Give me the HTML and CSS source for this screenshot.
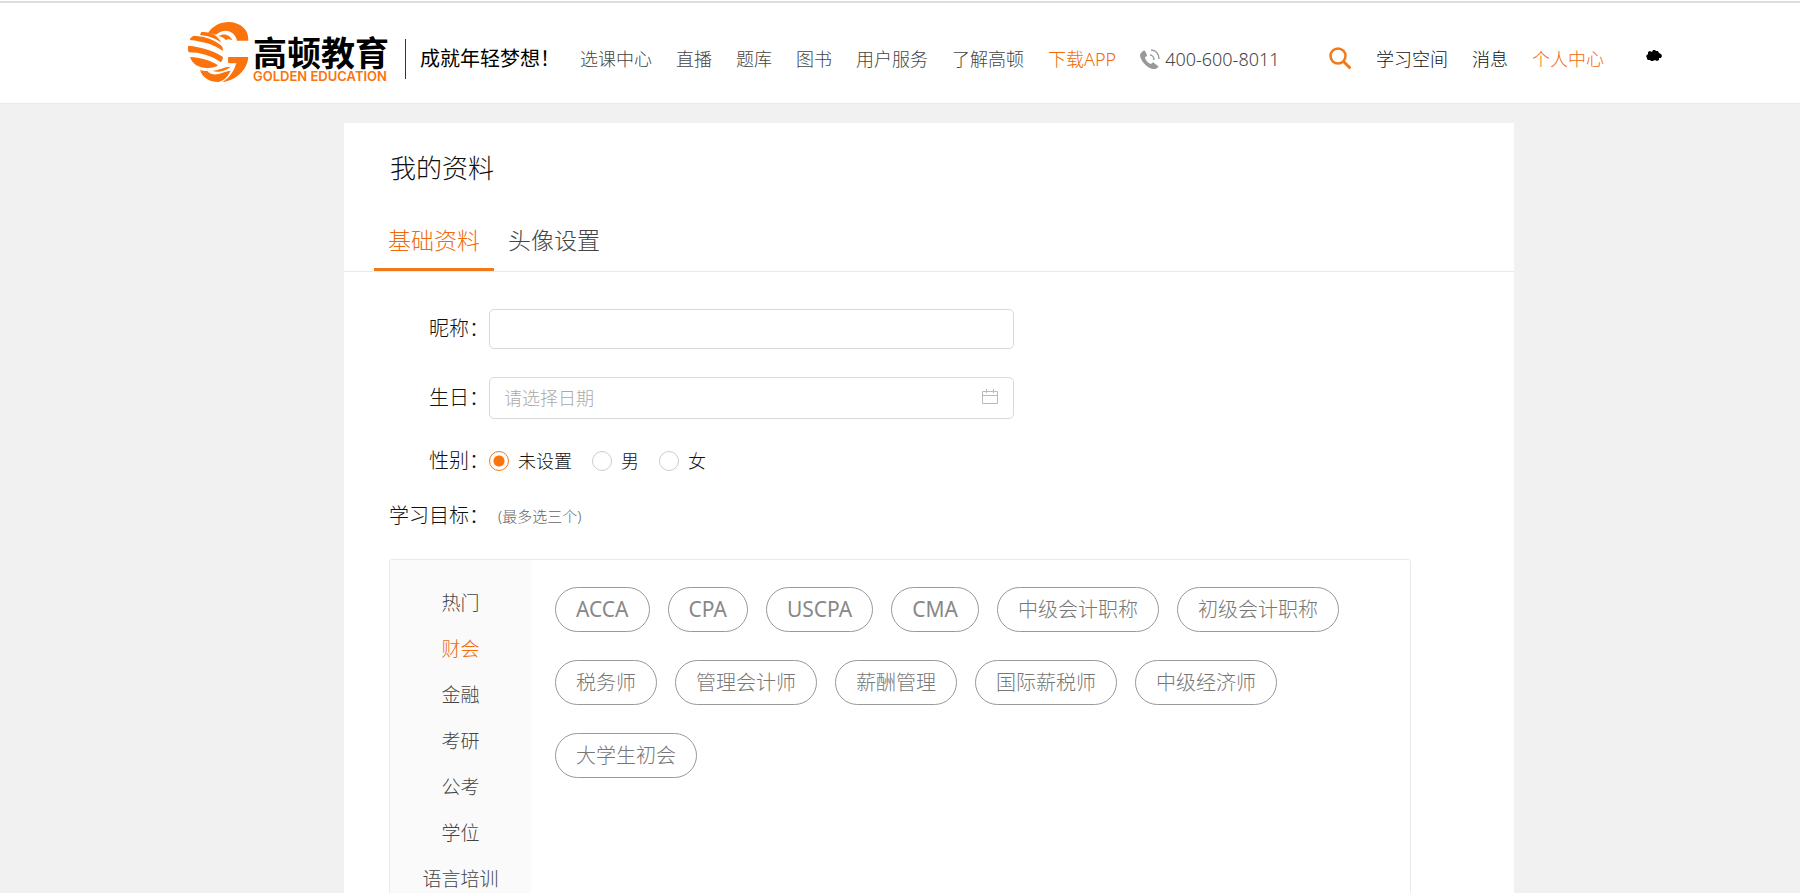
FILE: index.html
```html
<!DOCTYPE html>
<html lang="zh-CN">
<head>
<meta charset="utf-8">
<title>我的资料 - 高顿教育</title>
<link rel="stylesheet" href="styles.css">
</head>
<body>
<header class="header">
  <a class="logo" href="#">
    <svg class="logo-mark" viewBox="0 0 192 192" aria-hidden="true">
      <g fill="#fb730c">
        <path d="M66 40C84 10 122 0 150 10c26 9 38 28 37 52h-34C148 36 118 20 90 44c-8-2-16-3-24-4z"/>
        <path d="M97 48c16-10 36-4 42 13-8-4-14-4-20-1-5-6-12-10-22-12z"/>
        <path d="M46 36c27-2 50 10 60 32-16-12-36-20-64-23z"/>
        <path d="M24 47c34 2 66 14 83 31 4 4 4 12 3 15C86 74 50 64 12 60c-1-5 5-10 12-13z"/>
        <path d="M7 77c38 4 76 15 104 34-1 7-3 12-6 16C76 107 42 97 8 97c-3-8-3-13-1-20z"/>
        <path d="M12 111c30 1 62 10 84 25-8 6-20 9-32 8-26 0-45-12-52-33z"/>
        <path d="M126 111h61c-3 38-36 71-78 75 22-12 36-34 42-57-9 2-17 1-25-1 0-6 1-11 0-17z"/>
        <path d="M42 149c6 3 14 4 22 4 6 9 20 12 34 9 14-4 24-9 36-10-8 17-20 29-36 34-28 0-50-14-56-37z"/>
        <path d="M80 152c22-1 32-12 54-12-12 11-38 20-54 12z"/>
      </g>
    </svg>
    <span class="logo-text"><span class="logo-cn">高顿教育</span><span class="logo-en">GOLDEN EDUCATION</span></span>
  </a>
  <p class="slogan">成就年轻梦想！</p>
  <nav class="nav">
    <a href="#">选课中心</a>
    <a href="#">直播</a>
    <a href="#">题库</a>
    <a href="#">图书</a>
    <a href="#">用户服务</a>
    <a href="#">了解高顿</a>
    <a class="accent" href="#">下载APP</a>
  </nav>
  <a class="phone" href="tel:4006008011">
    <svg width="20" height="20" viewBox="0 0 20 20" aria-hidden="true">
      <path d="M2 3C3 2 4 1 5 2l2 4c0 1-1 2-2 2 0 3 3 6 6 7 1-1 2-2 3-1l4 3c1 1 0 2-1 2-2 2-6 1-9-1C4 15 0 10 0 6c0-1 1-2 2-3z" fill="#999"/>
      <path d="M10 6c2 0 4 2 4 5M11 1c5 0 8 4 8 9" fill="none" stroke="#999" stroke-width="1.500"/>
    </svg>
    400-600-8011
  </a>
  <button class="search" type="button" aria-label="搜索">
    <svg width="22" height="22" viewBox="0 0 22 22" aria-hidden="true">
      <circle cx="9" cy="9" r="7.500" fill="none" stroke="#f07a1a" stroke-width="2.500"/>
      <path d="M14.500 14.500l6 6" stroke="#f07a1a" stroke-width="3" stroke-linecap="round"/>
    </svg>
  </button>
  <nav class="nav user-nav">
    <a href="#">学习空间</a>
    <a href="#">消息</a>
    <a class="accent" href="#">个人中心</a>
  </nav>
  <svg class="avatar" width="16" height="12" viewBox="0 0 16 12" aria-hidden="true">
    <path d="M1 8C0 7 0 5 1 5l1-1V2l2-1 2 1 1-2h2l1 1 2 0 1 2 2 1 1 2-1 2-2 0 0 2-2 1-2-1-2 1-2 0-1-1-2 0-1-1z"/>
  </svg>
</header>

<main class="page">
  <section class="card">
    <h1 class="title">我的资料</h1>
    <div class="tabs" role="tablist">
      <button class="tab active" type="button" role="tab" aria-selected="true">基础资料</button>
      <button class="tab" type="button" role="tab" aria-selected="false">头像设置</button>
    </div>
    <form class="form">
      <div class="row">
        <label class="label" for="nickname">昵称：</label>
        <div class="control"><input class="field" id="nickname" type="text"></div>
      </div>
      <div class="row">
        <label class="label" for="birthday">生日：</label>
        <div class="control">
          <input class="field date" id="birthday" type="text" placeholder="请选择日期">
          <svg class="calendar" width="16" height="16" viewBox="0 0 16 16" fill="none" stroke="#bbb" aria-hidden="true">
            <path d="M0.500 2.500h15v12h-15zM0.500 6.500h15M4.500 0v4M11.500 0v4"/>
          </svg>
        </div>
      </div>
      <div class="row" role="radiogroup" aria-labelledby="gender">
        <span class="label" id="gender">性别：</span>
        <div class="radios">
          <label class="radio"><input type="radio" name="gender" checked>未设置</label>
          <label class="radio"><input type="radio" name="gender">男</label>
          <label class="radio"><input type="radio" name="gender">女</label>
        </div>
      </div>
      <div class="row goal">
        <span class="label">学习目标：</span>
        <span class="hint">(最多选三个)</span>
      </div>
      <div class="picker">
        <div class="categories">
          <button class="category" type="button">热门</button>
          <button class="category accent" type="button">财会</button>
          <button class="category" type="button">金融</button>
          <button class="category" type="button">考研</button>
          <button class="category" type="button">公考</button>
          <button class="category" type="button">学位</button>
          <button class="category" type="button">语言培训</button>
        </div>
        <div class="options">
          <button class="pill latin" type="button">ACCA</button>
          <button class="pill latin" type="button">CPA</button>
          <button class="pill latin" type="button">USCPA</button>
          <button class="pill latin" type="button">CMA</button>
          <button class="pill" type="button">中级会计职称</button>
          <button class="pill" type="button">初级会计职称</button>
          <button class="pill" type="button">税务师</button>
          <button class="pill" type="button">管理会计师</button>
          <button class="pill" type="button">薪酬管理</button>
          <button class="pill" type="button">国际薪税师</button>
          <button class="pill" type="button">中级经济师</button>
          <button class="pill" type="button">大学生初会</button>
        </div>
      </div>
    </form>
  </section>
</main>
</body>
</html>
```

FILE: styles.css
```css
* { box-sizing: border-box; }
html { background: #f1f1f1; overflow: hidden; }
body {
  margin: 0;
  font-family: "Noto Sans", "Noto Sans CJK SC", sans-serif;
  font-weight: 300;
  color: #111;
}
a { color: inherit; text-decoration: none; }
button, input { font: inherit; color: inherit; }
button { border: 0; padding: 0; background: none; cursor: pointer; }

.header {
  display: flex;
  align-items: center;
  height: 104px;
  padding: 14px 138px 0 186px;
  background: #fff;
  border-top: 1px solid #fff;
  border-bottom: 1px solid #eaeaea;
  box-shadow: inset 0 2px #ddd;
  white-space: nowrap;
}
.logo { display: flex; align-items: center; }
.logo-mark { width: 64px; height: 64px; margin-bottom: 14px; }
.logo-text { display: flex; flex-direction: column; padding: 1px 0 2px 3px; }
.logo-cn { font-size: 34px; font-weight: 700; line-height: 34px; color: #000; }
.logo-en { font-family: Inter, sans-serif; font-size: 13px; font-weight: 600; line-height: 12px; color: #fb730c; }
.slogan {
  margin: 0 0 0 16px;
  padding-left: 14px;
  border-left: 1px solid #333;
  font-size: 20px;
  font-weight: 400;
  line-height: 40px;
  color: #000;
}
.nav { display: flex; gap: 24px; margin-left: 20px; font-size: 18px; line-height: 26px; color: #444; }
.phone { display: flex; align-items: center; gap: 5px; margin-left: 24px; font-size: 18px; line-height: 28px; color: #444; }
.search { display: flex; margin: 0 0 3px auto; }
.user-nav { margin-left: 25px; color: #111; }
.avatar { margin: 0 0 7px 42px; }
.accent, .nav .accent { color: #f06a0a; }

.page { padding: 19px 286px 0 344px; }
.card { background: #fff; min-height: 800px; }
.title { margin: 0; padding: 25px 46px 0; font-size: 26px; font-weight: 300; line-height: 40px; }
.tabs { display: flex; padding: 23px 30px 0; border-bottom: 1px solid #eaeaea; }
.tab { padding: 12px 14px 11px; border-bottom: 3px solid transparent; font-size: 23px; line-height: 34px; color: #444; }
.tab.active { color: #f06a0a; border-color: #f07a1a; }

.form { padding: 37px 103px 0 45px; }
.row { display: flex; align-items: center; margin-bottom: 28px; }
.row + .row { margin-bottom: 27px; }
.label { flex: none; width: 100px; font-size: 20px; line-height: 30px; text-align: right; white-space: nowrap; }
.control { position: relative; flex: 0 1 525px; }
.field {
  display: block;
  width: 100%;
  height: 40px;
  padding: 0 48px 0 14px;
  border: 1px solid #d9d9d9;
  border-radius: 5px;
  background: #fff;
  font-size: 18px;
  outline: none;
}
.field.date { height: 42px; }
.field::placeholder { color: #aaa; opacity: 1; }
.calendar { position: absolute; right: 16px; top: 12px; }
.radios { display: flex; gap: 20px; }
.radio { display: flex; align-items: center; gap: 9px; font-size: 18px; line-height: 28px; }
.radio input {
  appearance: none;
  width: 20px;
  height: 20px;
  margin: 0;
  border: 1px solid #ccc;
  border-radius: 50%;
}
.radio input:checked { border-color: #f07a1a; background: radial-gradient(circle, #fb730c 5px, transparent 6px); }
.row.goal { margin: -2px 0 28px; }
.hint { margin-left: 9px; font-size: 15px; line-height: 30px; color: #666; }

.picker { display: flex; min-height: 400px; border: 1px solid #eaeaea; border-radius: 3px; }
.categories { display: flex; flex-direction: column; flex: none; width: 141px; padding-top: 20px; background: #fafafa; }
.category { font-size: 19px; line-height: 46px; color: #444; }
.category.accent { color: #f06a0a; }
.options { display: flex; flex-wrap: wrap; align-content: flex-start; gap: 28px 18px; padding: 27px 24px; }
.pill { padding: 0 20px; border: 1px solid #999; border-radius: 23px; font-size: 20px; line-height: 43px; color: #777; }
.pill.latin { font-size: 21px; font-weight: 400; color: #888; }
```
